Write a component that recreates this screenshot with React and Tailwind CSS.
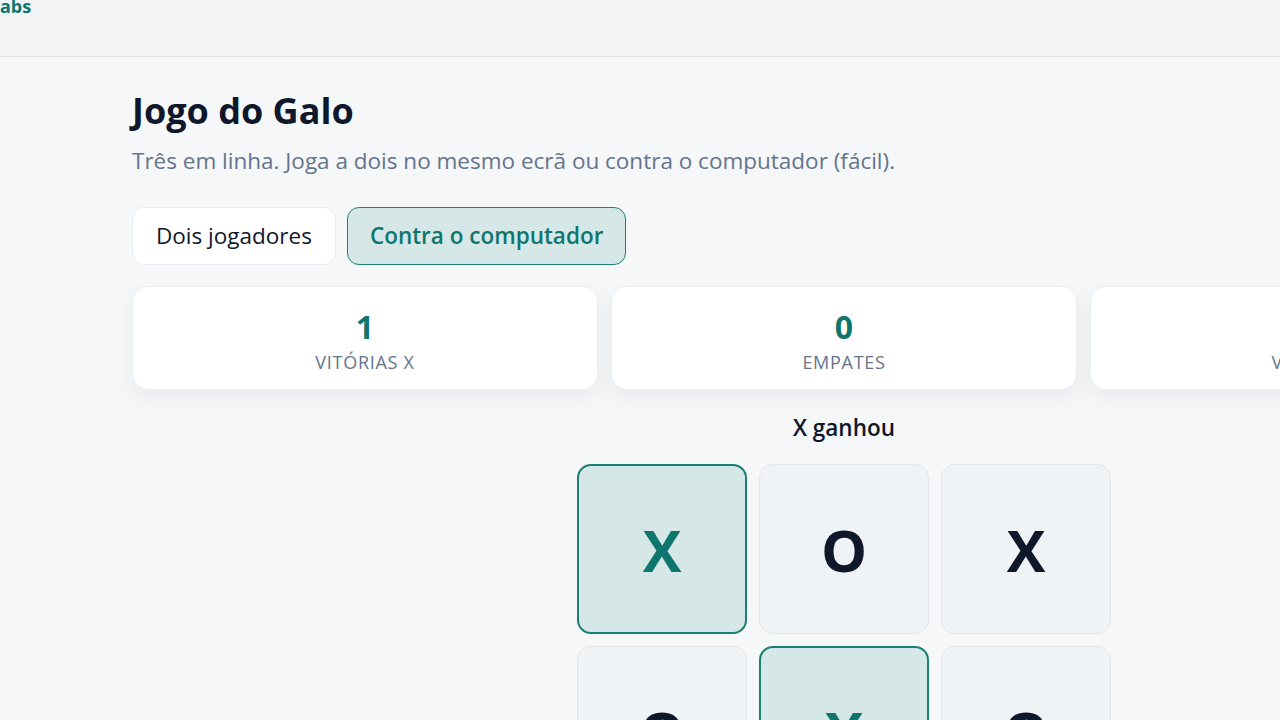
import { useState } from "react";

const cells = ["X", "O", "X", "O", "X", "O", "", "", "X"];
const winning = [0, 4, 8];

function ScoreCard({ value, label }) {
    return (
        <div className="w-[466px] h-[104px] shrink-0 bg-white rounded-2xl border border-[#eceff2] shadow-[0_8px_24px_rgba(15,23,42,0.06)] flex flex-col items-center pt-[21px]">
            <span className="text-[32px] leading-[38px] font-bold text-[#0f766e]">{value}</span>
            <span className="mt-[3px] text-[18px] leading-[26px] tracking-[0.04em] text-[#64748b] uppercase">{label}</span>
        </div>
    );
}

export default function App() {
    const [mode, setMode] = useState("cpu");

    const tab = (active) =>
        `h-[58px] rounded-xl border text-[22.5px] ${active ? "px-[22px] bg-[#d6e7e8] border-[#1f7f74] text-[#0f766e] font-semibold" : "px-[23px] bg-white border-[#e8ebee] text-[#0f172a]"}`;

    return (
        <div className="w-[1280px] h-[720px] overflow-hidden bg-[#f5f7f9] text-[#0f172a] font-['Open_Sans',sans-serif]">
            <header className="h-[57px] flex items-start bg-[#f2f4f6] border-b border-[#dfe3e7]">
                <span className="-mt-[3px] text-[18px] leading-none font-bold text-[#0f766e]">abs</span>
            </header>

            <main className="w-[1424px] ml-[132px] pt-[32px]">
                <h1 className="text-[36px] leading-[44px] font-bold">Jogo do Galo</h1>
                <p className="mt-[12px] text-[22.5px] leading-[32px] text-[#64748b]">
                    Três em linha. Joga a dois no mesmo ecrã ou contra o computador (fácil).
                </p>

                <div className="flex gap-[11px] mt-[30px]">
                    <button onClick={() => setMode("two")} className={tab(mode === "two")}>
                        Dois jogadores
                    </button>
                    <button onClick={() => setMode("cpu")} className={tab(mode === "cpu")}>
                        Contra o computador
                    </button>
                </div>

                <div className="flex gap-[13px] mt-[21px]">
                    <ScoreCard value="1" label="Vitórias X" />
                    <ScoreCard value="0" label="Empates" />
                    <ScoreCard value="0" label="Vitórias O" />
                </div>

                <div className="flex flex-col items-center mt-[22px]">
                    <p className="text-[22.5px] leading-[32px] font-semibold">X ganhou</p>
                    <div className="grid grid-cols-[repeat(3,170px)] auto-rows-[170px] gap-[12px] mt-[20px]">
                        {cells.map((c, i) => {
                            const win = winning.includes(i);
                            return (
                                <button
                                    key={i}
                                    className={`rounded-[14px] flex items-center justify-center text-[58px] font-bold ${win ? "bg-[#d6e7e8] border-2 border-[#1a7f73] text-[#0f766e]" : "bg-[#eff3f6] border border-[#e2e6ea] text-[#0f172a]"}`}
                                >
                                    {c}
                                </button>
                            );
                        })}
                    </div>
                </div>
            </main>
        </div>
    );
}
